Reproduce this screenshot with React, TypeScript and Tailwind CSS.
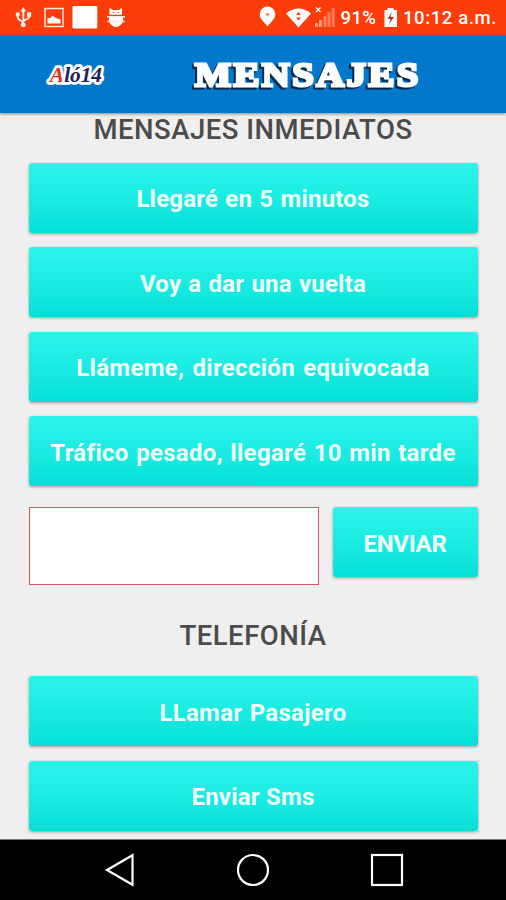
import type { ReactNode } from 'react'
import clsx from 'clsx'

const quickMessages = [
  { label: 'Llegaré en 5 minutos', tracking: 'tracking-[0.2px] [word-spacing:1px]' },
  { label: 'Voy a dar una vuelta', tracking: 'tracking-[0.2px] [word-spacing:1px]' },
  { label: 'Llámeme, dirección equivocada', tracking: 'tracking-[0.3px] [word-spacing:2px]' },
  { label: 'Tráfico pesado, llegaré 10 min tarde', tracking: 'tracking-[0.3px] [word-spacing:1.2px]' },
]

const phoneActions = [
  { label: 'LLamar Pasajero', tracking: 'tracking-[0.3px] [word-spacing:1px]' },
  { label: 'Enviar Sms', tracking: 'tracking-[0.2px]' },
]

function ActionButton({ children, className }: { children: ReactNode; className?: string }) {
  return (
    <button
      className={clsx(
        'flex h-[70px] shrink-0 items-center justify-center whitespace-nowrap rounded-[3px] bg-gradient-to-b from-[#2cf3ea] via-[#1aece3] to-[#03dfd7] pt-[3px] text-[24px] font-bold text-[#f2ffff] shadow-[0_1px_3px_rgba(0,0,0,0.35)]',
        className,
      )}
    >
      {children}
    </button>
  )
}

function StatusBar() {
  return (
    <div className="flex h-[35px] shrink-0 items-center bg-[#fc3d0a] text-white">
      <svg width="253" height="35" viewBox="0 0 253 35" fill="none" stroke="#ffe9e2">
        {/* usb */}
        <path d="M23.3 10v15M17.8 14v3.5q0 2 5.5 4.500M29 13.500v3.500q0 2-5.700 3.500" strokeWidth="2" />
        <path d="M20.300 11.500l3-4.500 3 4.500z" fill="#ffe9e2" stroke="none" />
        <circle cx="17.800" cy="14.500" r="2.200" fill="#ffe9e2" stroke="none" />
        <path d="M26.800 12.300h4.400v4.400h-4.400z" fill="#ffe9e2" stroke="none" />
        <circle cx="23.300" cy="24.800" r="2.500" fill="#ffe9e2" stroke="none" />
        {/* picture */}
        <rect x="45" y="8.500" width="18" height="18" strokeWidth="1.500" />
        <path d="M47.500 23.500v-5.500h3l1.500-2 3 1 2 1.500 3.500 1v4z" fill="#fff" stroke="none" />
        <rect x="72.500" y="6" width="24.800" height="22.500" rx="1" fill="#fff" stroke="none" />
        {/* debug cat */}
        <path d="M109.500 7.500l3 2.500h6.500l3-2.500v7.500h-12.500zM109 16.500h14v3.500c0 4-4 7-7 7s-7-3-7-7z" fill="#fff" stroke="none" />
        <path d="M107 16.800h18M107.500 21.300h17" strokeWidth="1.700" />
        <path d="M109.500 15.200h12.500M112.500 12.500h1.500M117.500 12.500h1.500" stroke="#fc3d0a" strokeWidth="0.900" />
      </svg>
      <svg width="84" height="35" viewBox="253 0 84 35" fill="#fff">
        {/* location */}
        <path d="M267.500 26.500c-2-3.500-7.800-7-7.800-12.300a7.800 7.800 0 0 1 15.600 0c0 5.300-5.800 8.800-7.800 12.300z" />
        <circle cx="267.500" cy="14.300" r="1.400" fill="#fc6a43" />
        {/* wifi */}
        <path d="M286 13.500q12.500-10 25 0l-12.500 14z" />
        <path d="M296 15l2.500-3 2.500 3zM296 17.500l2.500 3 2.500-3z" fill="#fc3d0a" />
        {/* signal */}
        <path d="M316 7.500l4.500 4.500M320.500 7.500l-4.500 4.500" stroke="#fff" strokeWidth="1.300" />
        <path d="M315 23h3v4h-3zM319 20h3v7h-3z" fill="#ff9b80" />
        <path d="M323.500 16h3v11h-3zM327.500 12h3v15h-3zM331.700 8h3v19h-3z" fill="#ff7c59" />
      </svg>
      <span className="w-[45px] whitespace-nowrap pl-[3.500px] pt-0.5 text-[18.500px] font-medium tracking-[0.4px]">91%</span>
      <svg width="20" height="35" viewBox="382 0 20 35">
        <path d="M384.500 10h3V8h6v2h3.500v17h-12.500z" fill="#fff" />
        <path d="M392 12l-4.500 7h3l-1.500 5 5-7h-3.500z" fill="#b7321c" />
      </svg>
      <span className="whitespace-nowrap pl-px pt-0.5 text-[18.500px] font-medium tracking-[0.6px]">10:12 a.m.</span>
    </div>
  )
}

function Header() {
  return (
    <header className="z-10 h-[77.500px] shrink-0 border-t border-[#4868b8] bg-[#0278cd] shadow-[0_1px_3px_rgba(0,0,0,0.45)]">
      <svg width="506" height="76" viewBox="0 36 506 76">
        {/* brand, outlined in white */}
        <text
          x="50"
          y="81.500"
          fontFamily="'Liberation Serif', serif"
          fontWeight="700"
          fontStyle="italic"
          fontSize="21"
          stroke="#fff"
          strokeWidth="5.500"
          strokeLinejoin="round"
          textLength="52"
          lengthAdjust="spacingAndGlyphs"
          className="[paint-order:stroke]"
        >
          <tspan fill="#f02a20">A</tspan>
          <tspan fill="#20205a">ló14</tspan>
        </text>
        <text
          x="195"
          y="86"
          fontFamily="'Liberation Serif', serif"
          fontWeight="700"
          fontSize="33"
          fill="#fff"
          stroke="#fff"
          strokeWidth="3"
          letterSpacing="2.500"
          textLength="226"
          lengthAdjust="spacingAndGlyphs"
          className="drop-shadow-[-1.500px_2px_0.500px_#06284d]"
        >
          MENSAJES
        </text>
      </svg>
    </header>
  )
}

function NavBar() {
  return (
    <nav className="flex h-[61px] shrink-0 justify-center border-t border-[#777] bg-black">
      <svg width="506" height="60" viewBox="0 840 506 60" fill="none" stroke="#fff" strokeWidth="2.200">
        <path d="M107 870l25.500-14.800v29.600z" />
        <circle cx="253" cy="870" r="15" />
        <rect x="372" y="855" width="30" height="30" />
      </svg>
    </nav>
  )
}

export default function App() {
  return (
    <div className="flex h-[900px] w-[506px] flex-col overflow-hidden bg-[#efefef] font-['Roboto',sans-serif]">
      <StatusBar />
      <Header />
      <main className="flex min-h-0 flex-1 flex-col px-[28.500px]">
        <h2 className="h-[50px] whitespace-nowrap text-center text-[27.500px] font-medium leading-[33px] tracking-[0.5px] text-[#4b4b4b]">
          MENSAJES INMEDIATOS
        </h2>
        <div className="flex flex-col gap-[14.500px]">
          {quickMessages.map(({ label, tracking }) => (
            <ActionButton key={label} className={tracking}>{label}</ActionButton>
          ))}
        </div>
        <div className="mt-[20.500px] flex gap-3.5">
          <input className="h-[78px] w-[290px] border border-[#d9575c] bg-white px-3 text-2xl" />
          <ActionButton className="mt-[0.500px] flex-1 tracking-[-0.3px]">ENVIAR</ActionButton>
        </div>
        <h2 className="flex h-[91.500px] items-center justify-center pt-[11px] text-[27.500px] font-medium tracking-[0.5px] text-[#4b4b4b]">
          TELEFONÍA
        </h2>
        <div className="flex flex-col gap-[14.500px]">
          {phoneActions.map(({ label, tracking }) => (
            <ActionButton key={label} className={tracking}>{label}</ActionButton>
          ))}
        </div>
      </main>
      <NavBar />
    </div>
  )
}
